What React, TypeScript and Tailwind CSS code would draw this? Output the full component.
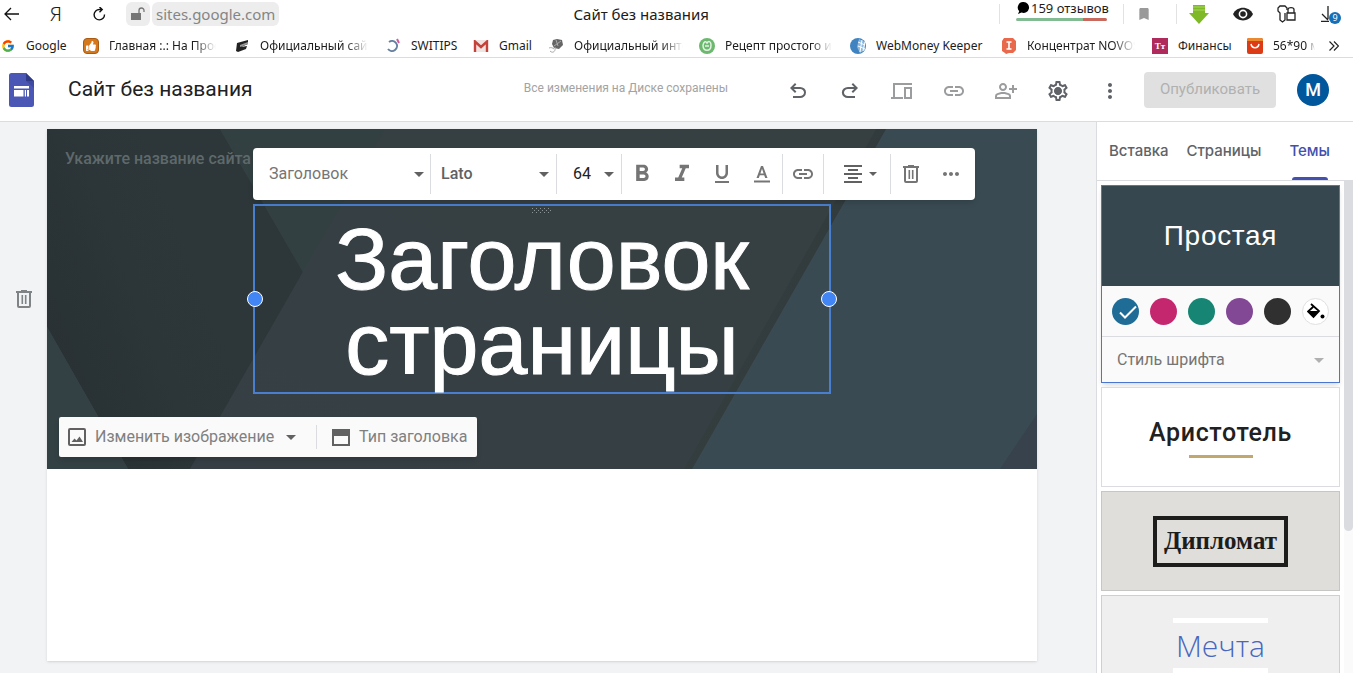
import type { ReactNode } from "react";
import { FcGoogle } from "react-icons/fc";
import { FaThumbsUp } from "react-icons/fa";
import {
  MdBookmark,
  MdFormatAlignCenter,
  MdFormatBold,
  MdFormatItalic,
  MdFormatUnderlined,
  MdLink,
  MdMoreHoriz,
  MdMoreVert,
  MdOutlinePersonAddAlt,
  MdOutlineSettings,
} from "react-icons/md";

const SWATCHES = [
  { name: "Синий", color: "bg-[#1f6c96]", active: true },
  { name: "Розовый", color: "bg-[#c5276f]", active: false },
  { name: "Зелёный", color: "bg-[#178573]", active: false },
  { name: "Фиолетовый", color: "bg-[#824795]", active: false },
  { name: "Чёрный", color: "bg-[#303030]", active: false },
];

function Caret({ className = "text-[#616161]" }: { className?: string }) {
  return (
    <svg viewBox="0 0 10 5" className={`w-2.5 h-[5px] shrink-0 pointer-events-none ${className}`}>
      <path d="M0 0h10L5 5z" fill="currentColor" />
    </svg>
  );
}

function TrashIcon() {
  return (
    <svg viewBox="0 0 16 18" className="w-4 h-[18px]" fill="none" stroke="currentColor" strokeWidth="2">
      <path d="M0 2h16M5 1h6" />
      <path d="M2 2v14a1 1 0 0 0 1 1h10a1 1 0 0 0 1-1V2" />
      <path d="M6.3 5v9M9.7 5v9" strokeWidth="1.6" />
    </svg>
  );
}

function UndoIcon() {
  return (
    <svg viewBox="0 -960 960 960" className="size-6" fill="currentColor">
      <path d="M280-200v-80h284q63 0 109.500-40T720-420q0-60-46.500-100T564-560H312l104 104-56 56-200-200 200-200 56 56-104 104h252q97 0 169.500 63T800-420q0 94-72.500 157T564-200H280Z" />
    </svg>
  );
}

function RedoIcon() {
  return (
    <svg viewBox="0 -960 960 960" className="size-6" fill="currentColor">
      <path d="M396-200q-97 0-169.500-63T154-420q0-94 72.500-157T396-640h252L544-744l56-56 200 200-200 200-56-56 104-104H396q-63 0-109.500 40T240-420q0 60 46.500 100T396-280h284v80H396Z" />
    </svg>
  );
}

function DevicesIcon() {
  return (
    <svg viewBox="0 0 24 24" className="size-6" fill="none" stroke="currentColor" strokeWidth="2">
      <path d="M22 5H4v13M1 19h12" />
      <rect x="15" y="9" width="6" height="10" />
    </svg>
  );
}

function SettingsIcon() {
  return (
    <span className="grid">
      <MdOutlineSettings className="size-6 col-start-1 row-start-1" />
      <svg viewBox="0 0 24 24" className="size-6 col-start-1 row-start-1">
        <circle cx="12" cy="12" r="3.500" fill="currentColor" />
      </svg>
    </span>
  );
}

function SitesLogo() {
  return (
    <svg viewBox="0 0 25 34" className="w-[25px] h-[34px] shrink-0">
      <path d="M2.500 0H17l8 8v23.500a2.500 2.500 0 0 1-2.500 2.500h-20A2.500 2.500 0 0 1 0 31.500v-29A2.500 2.500 0 0 1 2.500 0z" fill="#4a57b5" />
      <path d="M17 8h8v7z" fill="#3f4ba2" />
      <path d="M17 0l8 8h-8z" fill="#2f3b86" />
      <path d="M5 13h15v2.500H5zM5 17h9.500v6.500H5zM15.800 17h1.200v6.500h-1.200zM18 17h2v6.500h-2z" fill="#fff" />
    </svg>
  );
}

function Bookmark({ icon, label, width }: { icon: ReactNode; label: string; width: string }) {
  return (
    <a href="#" className={`flex items-center shrink-0 gap-2.5 ${width}`}>
      <span className="size-4 shrink-0 flex items-center justify-center">{icon}</span>
      <span className="flex-1 overflow-hidden whitespace-nowrap">{label}</span>
    </a>
  );
}

const FADE = " [&>span:last-child]:[mask-image:linear-gradient(to_right,#000_80%,transparent)]";

function BrowserBar() {
  return (
    <div className="border-b border-[#dcdcdc] font-['Noto_Sans',sans-serif] text-[#1c1c1c]">
      <div className="h-7 flex items-center pl-1 pr-3">
        <button aria-label="Назад" className="w-4">
          <svg viewBox="0 0 16 14" className="w-4 h-3.5" fill="none" stroke="#111" strokeWidth="1.300">
            <path d="M15 7H1M7 1L1 7l6 6" />
          </svg>
        </button>
        <button aria-label="Яндекс" className="w-[72px] text-xl leading-6 font-light">Я</button>
        <button aria-label="Обновить" className="mr-5">
          <svg viewBox="0 0 14 14" className="size-3.5" fill="none" stroke="#111" strokeWidth="1.400">
            <path d="M12.500 7.500A5.200 5.200 0 1 1 7.500 2.500H10M7.500 0L10.200 2.500 7.500 5.200" />
          </svg>
        </button>
        <div className="flex items-center gap-0.5 text-[#858585]">
          <span className="size-6 rounded-md bg-[#ededed] flex items-center justify-center">
            <svg viewBox="0 0 14 14" className="size-3.5">
              <path d="M0 6h10v7H0z" fill="#777" />
              <path d="M8 6V3.500a2.500 2.500 0 0 1 5 0V5" fill="none" stroke="#777" strokeWidth="1.300" />
            </svg>
          </span>
          <span className="rounded-md bg-[#ededed] px-1 h-6 text-[15px] leading-6">sites.google.com</span>
        </div>
        <div className="flex-1 pl-1 text-center text-[15px]">Сайт без названия</div>
        <div className="flex items-center">
          <span className="w-px h-5 bg-[#e2e2e2] mr-4" />
          <a href="#" className="w-[91px] pb-2 text-[13px] leading-4">
            <span className="flex items-center gap-px whitespace-nowrap">
              <svg viewBox="0 0 14 12" className="w-3.5 h-3 shrink-0">
                <path d="M7.500 0a5.500 5.500 0 1 1-2 10.600L2 12l1.200-2.800A5.500 5.500 0 0 1 7.500 0z" fill="#000" />
              </svg>
              159 отзывов
            </span>
            <span className="flex h-[3px] mt-0.5 rounded-sm overflow-hidden">
              <span className="w-[67px] bg-[#82ba92]" />
              <span className="flex-1 bg-[#c9695d]" />
            </span>
          </a>
          <span className="w-px h-5 bg-[#e2e2e2] ml-4 mr-3" />
          <button aria-label="В закладки">
            <MdBookmark className="size-4 text-[#9a9a9a]" />
          </button>
          <span className="w-px h-5 bg-[#e2e2e2] ml-6 mr-3" />
          <button aria-label="Загрузчик" className="mr-6">
            <svg viewBox="0 0 20 20" className="size-5">
              <path d="M4 1h12v8h4L10 20 0 9h4z" fill="#7fb928" />
              <path d="M4 3h12M4 6h12" stroke="#a9d65c" strokeWidth="1" />
            </svg>
          </button>
          <button aria-label="Просмотр" className="mr-6">
            <svg viewBox="0 0 20 14" className="w-5 h-3.5">
              <path d="M0 7C4-1.500 16-1.500 20 7 16 15.500 4 15.500 0 7z" fill="#222" />
              <circle cx="10" cy="7" r="3.600" fill="none" stroke="#fff" strokeWidth="1.600" />
            </svg>
          </button>
          <button aria-label="Пароли" className="mr-6">
            <svg viewBox="0 0 20 18" className="w-5 h-[18px]" fill="none" stroke="#222" strokeWidth="1.300">
              <path d="M10 5V3L8 1H3L1 3v3l2 2v7l2.500 2L8 15V8" />
              <path d="M10 8h8v7h-8zM11 8V4.500C11 2 17 2 17 4.500V8" />
            </svg>
          </button>
          <button aria-label="Загрузки" className="relative size-5">
            <svg viewBox="0 0 14 16" className="w-3.5 h-4" fill="none" stroke="#222" strokeWidth="1.300">
              <path d="M7 0v13M1 8l6 6M0 15.300h8" />
            </svg>
            <span className="absolute left-2 top-2 size-3 rounded-full bg-[#1470b8] text-white text-[9px] leading-3 text-center">9</span>
          </button>
        </div>
      </div>

      <nav className="h-[29px] flex items-center pt-1.5 pr-3 text-xs leading-[18px] overflow-hidden">
        <Bookmark width="w-[83px]" label="Google" icon={<FcGoogle className="size-3.5" />} />
        <Bookmark
          width={"w-[133px] mr-[18px]" + FADE}
          label="Главная :.: На Просторах"
          icon={
            <span className="size-4 rounded-sm bg-[#d5781c] border border-[#a95a14] flex items-center justify-center">
              <FaThumbsUp className="size-2.5 text-white" />
            </span>
          }
        />
        <Bookmark
          width={"w-[134px] mr-[17px]" + FADE}
          label="Официальный сайт компании"
          icon={
            <svg viewBox="0 0 16 16" className="size-4">
              <path d="M3 5l11-3v4l-7 3 6-1-1 3-8 3-2-1z" fill="#222" />
              <path d="M6 7l8-3v2l-8 3z" fill="#999" />
            </svg>
          }
        />
        <Bookmark
          width="w-[88px]"
          label="SWITIPS"
          icon={
            <svg viewBox="0 0 16 16" className="size-4" fill="none" strokeWidth="2">
              <path d="M4 4a5 5 0 1 1-1 7" stroke="#66809f" />
              <path d="M12 1l2 4" stroke="#d05a9a" />
            </svg>
          }
        />
        <Bookmark
          width="w-[75px]"
          label="Gmail"
          icon={
            <svg viewBox="0 0 16 12" className="w-4 h-3">
              <path d="M1 0h14v12H1z" fill="#f0e4e2" />
              <path d="M2 12V1.500L8 7l6-5.500V12" fill="none" stroke="#c5423a" strokeWidth="2.400" />
            </svg>
          }
        />
        <Bookmark
          width={"w-[135px] mr-4" + FADE}
          label="Официальный интернет-магазин"
          icon={
            <svg viewBox="0 0 16 16" className="size-4">
              <path d="M5 2l4-1 5 1 1 5-4 4-5-1-2-4z" fill="#666" />
              <path d="M8 2l2 6M13 3L6 8M2 13c3 3 6 0 5-4M1 10c2-1 4 0 5 1" stroke="#aaa" fill="none" />
            </svg>
          }
        />
        <Bookmark
          width={"w-[133px] mr-[18px]" + FADE}
          label="Рецепт простого и вкусного"
          icon={
            <svg viewBox="0 0 16 16" className="size-4">
              <circle cx="8" cy="8" r="8" fill="#6cb86f" />
              <path d="M4 7c0 7 8 7 8 0M4 7c1-4 3-4 4-2 2-3 4-1 4 2M6 8h4" fill="none" stroke="#e3f3e3" strokeWidth="1.500" />
            </svg>
          }
        />
        <Bookmark
          width="w-[151px]"
          label="WebMoney Keeper"
          icon={
            <svg viewBox="0 0 16 16" className="size-4">
              <circle cx="8" cy="8" r="8" fill="#3f83c0" />
              <path d="M9 1l6 3v8l-5 3-3-6z" fill="#8cb8de" />
              <path d="M8 4l7 3M8 8l7 3M12 2l-2 12M15 4l-2 9" stroke="#fff" />
            </svg>
          }
        />
        <Bookmark
          width={"w-[134px] mr-[17px]" + FADE}
          label="Концентрат NOVOSTI"
          icon={
            <svg viewBox="0 0 16 16" className="size-4">
              <path d="M3 0h9l3 3v9l-3 3H8l-3 1-1-1-3-2V3z" fill="#e8694c" />
              <path d="M5.500 4h5M8 4v7M5.500 11h5" stroke="#fff" strokeWidth="1.600" />
            </svg>
          }
        />
        <Bookmark
          width="w-[95px]"
          label="Финансы"
          icon={
            <span className="size-4 bg-[#b02a5b] text-white font-['Liberation_Serif',serif] font-bold text-[9px] leading-4 text-center">
              Tт
            </span>
          }
        />
        <Bookmark
          width={"w-[68px]" + FADE}
          label="56*90 мм"
          icon={
            <svg viewBox="0 0 16 16" className="size-4">
              <rect width="16" height="16" rx="2" fill="#dd3b16" />
              <path d="M0 2a2 2 0 0 1 2-2h12a2 2 0 0 1 2 2v1H0z" fill="#e98a32" />
              <path d="M4 6c1 5 7 5 8 0" fill="none" stroke="#fff" strokeWidth="1.500" />
            </svg>
          }
        />
        <button aria-label="Ещё закладки" className="ml-auto mr-0.5 shrink-0">
          <svg viewBox="0 0 10 10" className="size-2.5" fill="none" stroke="#222" strokeWidth="1.200">
            <path d="M.5.5L5 5 .5 9.500M5 .5L9.500 5 5 9.500" />
          </svg>
        </button>
      </nav>
    </div>
  );
}

function AppHeader() {
  return (
    <header className="h-16 flex items-center pl-[9px] pr-6 border-b border-[#dadce0] bg-white">
      <SitesLogo />
      <h1 className="ml-[34px] pb-0.5 text-[21px] leading-7 text-[#202124]">Сайт без названия</h1>
      <div className="flex-1" />
      <p className="mr-[58px] pb-1 text-xs text-[#a3a3a3]">Все изменения на Диске сохранены</p>
      <div className="flex items-center gap-7 mr-[22px] pt-0.5 text-[#5f6368]">
        <button aria-label="Отменить"><UndoIcon /></button>
        <button aria-label="Повторить"><RedoIcon /></button>
        <button aria-label="Предварительный просмотр" className="text-[#9a9c9e]"><DevicesIcon /></button>
        <button aria-label="Копировать ссылку" className="text-[#9a9c9e]"><MdLink className="size-6" /></button>
        <button aria-label="Поделиться" className="text-[#9a9c9e]"><MdOutlinePersonAddAlt className="size-6" /></button>
        <button aria-label="Настройки"><SettingsIcon /></button>
        <button aria-label="Ещё"><MdMoreVert className="size-6" /></button>
      </div>
      <button className="h-9 w-[132px] rounded-sm bg-[#e0e0e0] text-[15px] text-[#b0b0b0]">Опубликовать</button>
      <button aria-label="Аккаунт" className="ml-[21px] size-8 rounded-full bg-[#01579b] text-white text-lg font-medium">
        М
      </button>
    </header>
  );
}

function TextToolbar() {
  return (
    <div className="absolute -left-0.5 -top-[58px] z-10 h-[52px] w-[722px] flex items-center rounded-sm bg-white shadow-md text-[#757575] text-base [&>*]:shrink-0">
      <div className="w-[178px] h-10 pl-4 pr-1.5 flex items-center border-r border-[#dadce0]">
        <select aria-label="Стиль текста" className="flex-1 appearance-none text-[#757575]">
          <option>Заголовок</option>
        </select>
        <Caret />
      </div>
      <div className="w-[126px] h-10 pl-2.5 pr-[7px] flex items-center border-r border-[#dadce0]">
        <select aria-label="Шрифт" className="flex-1 appearance-none font-medium text-[#616161]">
          <option>Lato</option>
        </select>
        <Caret />
      </div>
      <div className="w-[65px] h-10 pl-4 pr-[7px] flex items-center border-r border-[#dadce0]">
        <select aria-label="Размер" className="flex-1 appearance-none text-[#212121]">
          <option>64</option>
        </select>
        <Caret />
      </div>
      <div className="w-[161px] h-10 flex items-center border-r border-[#dadce0]">
        <button aria-label="Полужирный" className="w-10 flex justify-center"><MdFormatBold className="size-7" /></button>
        <button aria-label="Курсив" className="w-10 flex justify-center"><MdFormatItalic className="size-7" /></button>
        <button aria-label="Подчёркнутый" className="w-10 flex justify-center"><MdFormatUnderlined className="size-6" /></button>
        <button aria-label="Цвет текста" className="w-10 flex justify-center">
          <svg viewBox="0 0 16 18" className="w-4 h-[18px]" fill="currentColor">
            <path d="M7 1h2l4.500 12h-2.300l-1-2.800H5.800L4.800 13H2.500zM6.400 8.400h3.200L8 3.800z" />
            <path d="M0 15.500h16v2H0z" />
          </svg>
        </button>
      </div>
      <div className="w-[41px] h-10 flex items-center justify-center border-r border-[#dadce0]">
        <button aria-label="Вставить ссылку"><MdLink className="size-6" /></button>
      </div>
      <div className="w-[67px] h-10 pl-1 flex items-center justify-center border-r border-[#dadce0]">
        <button aria-label="Выравнивание" className="flex items-center gap-1 text-[#616161]">
          <MdFormatAlignCenter className="size-6" />
          <svg viewBox="0 0 8 4" className="w-2 h-1"><path d="M0 0h8L4 4z" fill="currentColor" /></svg>
        </button>
      </div>
      <div className="flex-1 h-10 px-3 flex items-center justify-between">
        <button aria-label="Удалить"><TrashIcon /></button>
        <button aria-label="Другие действия"><MdMoreHoriz className="size-6" /></button>
      </div>
    </div>
  );
}

function HeroBackdrop() {
  return (
    <svg viewBox="0 0 990 340" preserveAspectRatio="none" className="col-start-1 row-start-1 w-full h-[340px]">
      <defs>
        <linearGradient id="fold" x1="0" y1="0.7" x2="0.6" y2="0.4">
          <stop offset="0" stopColor="#293134" />
          <stop offset="0.4" stopColor="#2a3336" />
          <stop offset="0.6" stopColor="#2c3638" />
          <stop offset="1" stopColor="#2d3639" />
        </linearGradient>
        <linearGradient id="middle" x1="0" y1="1" x2="1" y2="0">
          <stop offset="0" stopColor="#363f45" />
          <stop offset="1" stopColor="#364041" />
        </linearGradient>
        <linearGradient id="crease" x1="0" y1="0" x2="1" y2="0.5">
          <stop offset="0" stopColor="#364041" />
          <stop offset="1" stopColor="#303a3c" />
        </linearGradient>
      </defs>
      <path d="M0 0h990v340H0z" fill="#3a4a52" />
      <path d="M336 0h503L645 340H140L256 143z" fill="url(#middle)" />
      <path d="M829 0h10L645 340h-8z" fill="url(#crease)" />
      <path d="M173 0h165l-82 143z" fill="#334042" />
      <path d="M0 0h173l83 143L143 340H81L0 198z" fill="url(#fold)" />
      <path d="M0 198l81 142H0z" fill="#334044" />
      <path d="M990 285v55h-37z" fill="#37424c" />
    </svg>
  );
}

function HeroSection() {
  return (
    <section className="grid">
      <HeroBackdrop />
      <div className="relative col-start-1 row-start-1 flex flex-col">
        <div className="h-[75px] pl-[18px] pt-[18px]">
          <input
            aria-label="Название сайта"
            placeholder="Укажите название сайта"
            className="w-[200px] text-base font-medium placeholder:text-[#5f696b]"
          />
        </div>
        <div className="relative mx-auto w-[578px] h-[190px] border-2 border-[#4a7fd0] pt-2.5">
          <TextToolbar />
          <h2 className="text-center text-[88px] leading-[85px] text-white [-webkit-text-stroke:1px_white] font-['Liberation_Sans',sans-serif]">
            Заголовок
            <br />
            страницы
          </h2>
          <span className="absolute -left-2 top-[85px] size-4 rounded-full border border-white bg-[#4285f4]" />
          <span className="absolute -right-2 top-[85px] size-4 rounded-full border border-white bg-[#4285f4]" />
          <svg viewBox="0 0 20 6" className="absolute left-[276px] top-0.5 w-5 h-1.5" stroke="#8a9295" strokeDasharray="1 3">
            <path d="M1 .5h19M3 2.500h17M1 4.500h19" />
          </svg>
        </div>
        <div className="absolute left-3 bottom-3 h-10 w-[418px] flex items-center rounded-xs bg-[#fafafa] shadow-md text-base text-[#808080]">
          <button className="h-6 w-[258px] pl-[9px] flex items-center border-r border-[#dadce0] whitespace-nowrap">
            <svg viewBox="0 0 18 18" className="size-[18px] mr-[9px] shrink-0 text-[#616161]">
              <rect x="1" y="1" width="16" height="16" rx="1" fill="none" stroke="currentColor" strokeWidth="2" />
              <path d="M3.500 14l3-3.500 2 2 3-4L15 14z" fill="currentColor" />
            </svg>
            <span className="mr-3">Изменить изображение</span>
            <Caret />
          </button>
          <button className="h-6 pl-[15px] flex items-center gap-[9px] whitespace-nowrap">
            <svg viewBox="0 0 18 17" className="w-[18px] h-[17px] shrink-0 text-[#616161]">
              <path d="M1 1h16v15H1z" fill="none" stroke="currentColor" strokeWidth="2" />
              <path d="M1 1h16v6H1z" fill="currentColor" />
            </svg>
            Тип заголовка
          </button>
        </div>
      </div>
    </section>
  );
}

function ThemesPanel() {
  return (
    <aside className="w-[257px] shrink-0 flex flex-col bg-white border-l border-[#dadce0]">
      <nav className="h-[59px] shrink-0 flex items-stretch justify-between pl-3 pr-[23px] border-b border-[#dadce0] text-[15px] font-medium font-['Inter',sans-serif] text-[#5f6368]">
        <button>Вставка</button>
        <button>Страницы</button>
        <button className="ml-2.5 flex flex-col items-center justify-between text-[#4250af]">
          <span className="h-1" />
          Темы
          <span className="h-[3px] w-9 rounded-t-sm bg-[#4250af]" />
        </button>
      </nav>
      <div className="flex-1 min-h-0 flex">
        <div className="flex-1 min-w-0 overflow-hidden pl-1 pt-1 pr-1 flex flex-col gap-1 [&>*]:shrink-0">
          <div className="h-[198px] border border-[#4a76d0] bg-[#fafafa] shadow-md">
            <button className="block w-full h-[100px] bg-[#37474f] text-white text-[28px] tracking-wide font-['Liberation_Sans',sans-serif]">
              Простая
            </button>
            <div className="h-[51px] px-2.5 flex items-center justify-between border-b border-[#dadce0]">
              {SWATCHES.map((swatch) => (
                <button
                  key={swatch.name}
                  aria-label={swatch.name}
                  className={`size-[27px] rounded-full flex items-center justify-center ${swatch.color}`}
                >
                  {swatch.active && (
                    <svg viewBox="0 0 18 14" className="w-[18px] h-3.5 mt-0.5 ml-1" fill="none" stroke="#fff" strokeWidth="2">
                      <path d="M1 7.500l5 5L17 1.500" />
                    </svg>
                  )}
                </button>
              ))}
              <button aria-label="Свой цвет" className="size-[27px] rounded-full border border-[#e0e0e0] bg-white flex items-center justify-center">
                <svg viewBox="0 0 18 16" className="w-[18px] h-4">
                  <path d="M4 1l8 7-5.500 6L1 8.500 6 4" fill="#fff" stroke="#000" strokeWidth="1.800" />
                  <path d="M1.500 8h10L6.500 14z" fill="#000" />
                  <circle cx="15.500" cy="13.500" r="2" fill="#000" />
                </svg>
              </button>
            </div>
            <div className="h-[45px] px-[15px] pt-px flex items-center">
              <select aria-label="Стиль шрифта" className="flex-1 appearance-none text-base text-[#757575]">
                <option>Стиль шрифта</option>
              </select>
              <Caret className="text-[#b0b0b0]" />
            </div>
          </div>
          <button className="h-[100px] border border-[#dadce0] bg-white flex flex-col items-center justify-center text-[25px] leading-8 tracking-wide font-medium text-[#212121]">
            Аристотель
            <span className="mt-1.5 w-16 h-[3px] bg-[#c0a86e]" />
          </button>
          <button className="h-[100px] border border-[#c6c6c4] bg-[#dfdedb] flex items-center justify-center">
            <span className="w-[135px] h-[51px] border-4 border-[#1d1d1b] flex items-center justify-center font-['Liberation_Serif','Noto_Serif',serif] text-[25px] font-bold text-[#1d1d1b]">
              Дипломат
            </span>
          </button>
          <button className="h-[100px] border border-[#cfcfcf] bg-[#efefef] flex items-center justify-center">
            <span className="w-[95px] border-y-[5px] border-white text-[30px] leading-[45px] text-[#4866bd] font-light font-['Open_Sans',sans-serif]">
              Мечта
            </span>
          </button>
        </div>
        <div className="w-[9px] shrink-0 bg-[#fafafa]">
          <div className="h-[350px] rounded-b-md bg-[#dadce0]" />
        </div>
      </div>
    </aside>
  );
}

export default function App() {
  return (
    <div className="h-screen flex flex-col overflow-hidden bg-white font-['Roboto',sans-serif]">
      <BrowserBar />
      <AppHeader />
      <main className="flex-1 min-h-0 flex bg-[#f1f3f4]">
        <div className="w-[47px] shrink-0 flex justify-center pt-[168px] text-[#808386]">
          <button aria-label="Удалить раздел" className="h-[18px]">
            <TrashIcon />
          </button>
        </div>
        <div className="flex-1 min-w-0 pt-[7px] pb-3 mr-[59px] flex flex-col">
          <div className="flex-1 bg-white shadow">
            <HeroSection />
          </div>
        </div>
        <ThemesPanel />
      </main>
    </div>
  );
}
